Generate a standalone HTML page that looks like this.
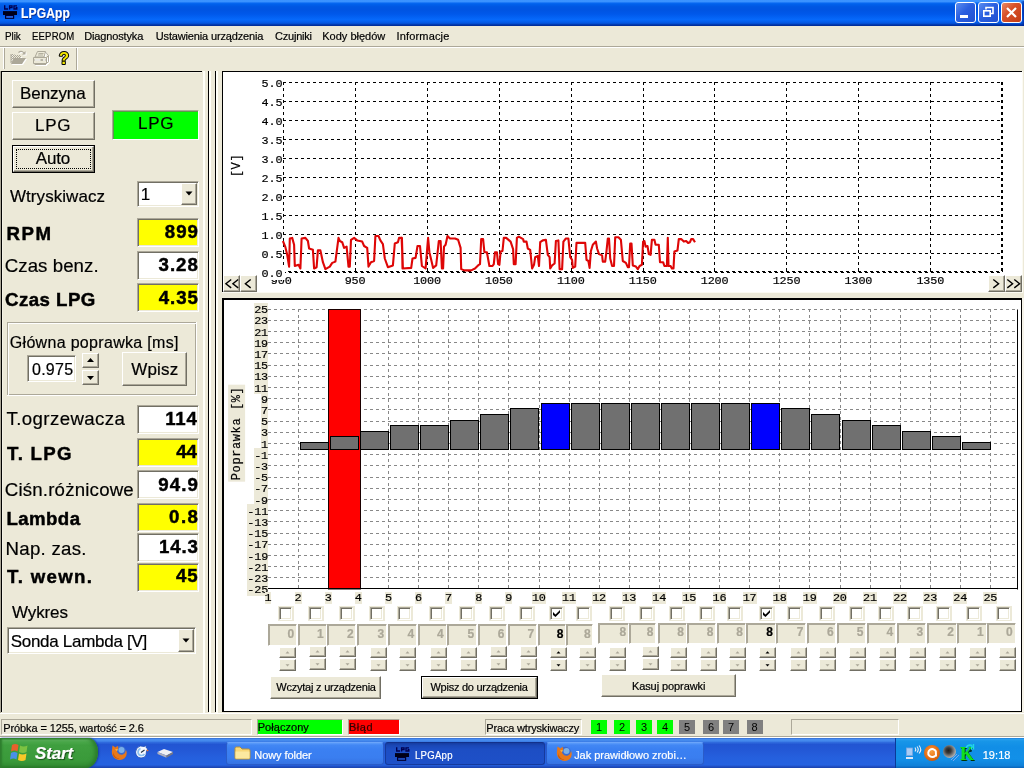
<!DOCTYPE html><html><head><meta charset="utf-8"><title>LPGApp</title><style>
*{box-sizing:border-box;margin:0;padding:0}
html,body{width:1024px;height:768px;overflow:hidden;background:#ece9d8;font-family:"Liberation Sans",sans-serif;}
.a{position:absolute}
.t{position:absolute;white-space:nowrap;color:#000;-webkit-text-stroke:0.2px}
#root{position:absolute;left:0;top:0;width:1024px;height:768px;will-change:transform}
.mono{font-family:"Liberation Mono",monospace;font-size:11.8px;letter-spacing:-0.15px}
.btn{position:absolute;background:#ece9d8;border:1px solid;border-color:#fff #716f64 #716f64 #fff;box-shadow:inset -1px -1px 0 #aca899}
.sunk{position:absolute;border:1px solid;border-color:#aca899 #fff #fff #aca899;box-shadow:inset 1px 1px 0 #716f64, inset -1px -1px 0 #ece9d8;}
.sb{position:absolute;border:1px solid;border-color:#aca899 #fff #fff #aca899}
</style></head><body><div id="root">
<div class="a" style="left:0;top:0;width:1024px;height:26px;background:linear-gradient(to bottom,#3b93ff 0px,#3a92ff 1.8px,#0a6af2 3px,#0061ec 4px,#0056e2 7px,#0054e2 10px,#0058ea 14px,#0464f6 18px,#0668fa 19.5px,#0562f2 21px,#0457e0 23px,#0348c8 24px,#002e9c 25px,#002e9c 26px)"></div>
<div class="a" style="left:1021px;top:1px;width:3px;height:25px;background:linear-gradient(to right,rgba(0,40,160,0),rgba(0,36,150,0.75))"></div>
<svg class="a" style="left:3px;top:5px" width="15" height="15" viewBox="0 0 15 15"><rect x="0" y="6.1" width="14" height="3.9" fill="#000018"/><rect x="2" y="9.8" width="9.2" height="4.1" fill="#000030"/><rect x="3.2" y="11.1" width="6.8" height="1.7" fill="#2a6ae8"/><path d="M1.7 0.2V4H5 M6.6 4.6V0.8H9V2.6H6.6 M14 0.8H11V4H13.8V2.6H12.6" fill="none" stroke="#000050" stroke-width="1.35"/></svg>
<div class="t" style="left:20.95px;top:6.28px;font-size:14px;line-height:14px;letter-spacing:0.17px;color:#fff;font-weight:bold;transform:scaleX(0.86);transform-origin:0 0;text-shadow:1px 1px 0 #0a2a8a;">LPGApp</div>
<div class="a" style="left:955px;top:2px;width:21px;height:21px;border:1px solid #fff;border-radius:3px;background:linear-gradient(135deg,#5b8df0 0%,#2a5fe0 45%,#2050d0 100%)"></div>
<div class="a" style="left:978px;top:2px;width:21px;height:21px;border:1px solid #fff;border-radius:3px;background:linear-gradient(135deg,#5b8df0 0%,#2a5fe0 45%,#2050d0 100%)"></div>
<div class="a" style="left:1001px;top:2px;width:21px;height:21px;border:1px solid #fff;border-radius:3px;background:linear-gradient(135deg,#e88a68 0%,#d8512a 40%,#c43c14 100%)"></div>
<div class="a" style="left:960px;top:15px;width:8px;height:3px;background:#fff"></div>
<svg class="a" style="left:978px;top:2px" width="21" height="21" viewBox="0 0 21 21"><path d="M8 7.5V5.5H15V11.5H13" fill="none" stroke="#fff" stroke-width="1.6"/><rect x="5.8" y="8.8" width="6.4" height="5.4" fill="none" stroke="#fff" stroke-width="1.6"/></svg>
<svg class="a" style="left:1001px;top:2px" width="21" height="21" viewBox="0 0 21 21"><path d="M6 6L15 15M15 6L6 15" stroke="#fff" stroke-width="2.2" fill="none"/></svg>
<div class="t" style="left:5.00px;top:31.02px;font-size:11px;line-height:11px;letter-spacing:-0.083px;color:#000;transform:scaleX(0.9);transform-origin:0 0;">Plik</div>
<div class="t" style="left:32.00px;top:31.02px;font-size:11px;line-height:11px;letter-spacing:0.2px;color:#000;transform:scaleX(0.87);transform-origin:0 0;">EEPROM</div>
<div class="t" style="left:84.25px;top:31.02px;font-size:11px;line-height:11px;letter-spacing:-0.15px;color:#000;">Diagnostyka</div>
<div class="t" style="left:155.75px;top:31.02px;font-size:11px;line-height:11px;letter-spacing:-0.15px;color:#000;">Ustawienia urządzenia</div>
<div class="t" style="left:275.00px;top:31.02px;font-size:11px;line-height:11px;letter-spacing:-0.215px;color:#000;">Czujniki</div>
<div class="t" style="left:322.25px;top:30.77px;font-size:11px;line-height:11px;letter-spacing:0.0px;color:#000;">Kody błędów</div>
<div class="t" style="left:396.50px;top:31.02px;font-size:11px;line-height:11px;letter-spacing:0.166px;color:#000;">Informacje</div>
<div class="a" style="left:0;top:46px;width:1024px;height:1px;background:#aca899"></div>
<div class="a" style="left:0;top:47px;width:1024px;height:1px;background:#fff"></div>
<div class="a" style="left:3px;top:48px;width:1px;height:21px;background:#fff"></div>
<div class="a" style="left:4px;top:48px;width:1px;height:21px;background:#aca899"></div>
<div class="a" style="left:76px;top:48px;width:1px;height:22px;background:#aca899"></div>
<div class="a" style="left:77px;top:48px;width:1px;height:22px;background:#fff"></div>
<svg class="a" style="left:10px;top:50px;filter:drop-shadow(1px 1px 0 #fff)" width="18" height="16" viewBox="0 0 18 16"><defs><pattern id="chk" width="2" height="2" patternUnits="userSpaceOnUse"><rect width="1" height="1" fill="#aca899"/><rect x="1" y="1" width="1" height="1" fill="#aca899"/></pattern></defs><path d="M1 4H4L5 5H11V8H3.5L1 13Z" fill="url(#chk)"/><path d="M1 4V13" stroke="#aca899" stroke-width="1"/><path d="M3.5 8H16L12 14H1Z" fill="#aca899"/><path d="M8.5 2.5Q11.5 0 14 3" stroke="#aca899" fill="none" stroke-width="1.1"/><path d="M15.5 1V4.5H12Z" fill="#aca899"/></svg>
<svg class="a" style="left:32px;top:50px;filter:drop-shadow(1px 1px 0 #fff)" width="18" height="16" viewBox="0 0 18 16"><path d="M5.5 1.5H13.5L12 7H3Z" fill="#ece9d8" stroke="#aca899"/><path d="M6.5 3.5H11.5M6 5H11" stroke="#aca899" stroke-width="0.9"/><path d="M1.5 7.5H14.5V13.5H1.5Z" fill="#ece9d8" stroke="#aca899"/><path d="M14.5 7.5L16.5 5.5V11.5L14.5 13.5M13.5 2L16.5 5.5" fill="none" stroke="#aca899"/><path d="M2.5 10H13.5" stroke="#aca899" stroke-width="1.6"/><rect x="3" y="9.3" width="5.5" height="1.4" fill="#fff"/><rect x="11" y="9.3" width="2" height="1.4" fill="#fff"/><path d="M2.5 14.5H14" stroke="#aca899" stroke-width="1"/></svg>
<svg class="a" style="left:55px;top:48px" width="20" height="20" viewBox="0 0 20 20"><text x="4" y="15.6" font-family="Liberation Sans" font-weight="bold" font-size="16.5" fill="#f4e800" stroke="#000" stroke-width="2" paint-order="stroke" stroke-linejoin="round">?</text></svg>
<div class="a" style="left:0;top:71px;width:1px;height:642px;background:#aca899"></div>
<div class="a" style="left:1px;top:71px;width:201px;height:1px;background:#000"></div>
<div class="a" style="left:1px;top:71px;width:1px;height:641px;background:#000"></div>
<div class="a" style="left:2px;top:72px;width:200px;height:1px;background:#f4f2e6"></div>
<div class="a" style="left:2px;top:72px;width:1px;height:640px;background:#f4f2e6"></div>
<div class="a" style="left:202.5px;top:71px;width:2px;height:642px;background:#fffff8"></div>
<div class="btn" style="left:12px;top:80px;width:83px;height:28px"></div>
<div class="t" style="left:20.00px;top:85.19px;font-size:17px;line-height:17px;letter-spacing:-0.082px;color:#000;">Benzyna</div>
<div class="btn" style="left:12px;top:112px;width:83px;height:28px"></div>
<div class="t" style="left:35.00px;top:116.94px;font-size:17px;line-height:17px;letter-spacing:0.75px;color:#000;">LPG</div>
<div class="a" style="left:12px;top:145px;width:83px;height:28px;background:#000"></div>
<div class="btn" style="left:13px;top:146px;width:81px;height:26px"></div>
<div class="a" style="left:16px;top:149px;width:75px;height:20px;border:1px dotted #000"></div>
<div class="t" style="left:35.75px;top:149.94px;font-size:17px;line-height:17px;letter-spacing:-0.163px;color:#000;">Auto</div>
<div class="sunk" style="left:112px;top:110px;width:87px;height:30px;background:#00ff00;box-shadow:inset 1px 1px 0 #5a9a4a"></div>
<div class="t" style="left:138.00px;top:115.44px;font-size:17px;line-height:17px;letter-spacing:0.75px;color:#000;">LPG</div>
<div class="t" style="left:10.00px;top:188.19px;font-size:17px;line-height:17px;letter-spacing:0.05px;color:#000;">Wtryskiwacz</div>
<div class="sunk" style="left:137px;top:181px;width:62px;height:26px;background:#fff"></div>
<div class="t" style="left:140.75px;top:186.44px;font-size:17px;line-height:17px;letter-spacing:0px;color:#000;">1</div>
<div class="btn" style="left:181px;top:183px;width:16px;height:22px"></div>
<svg class="a" style="left:185px;top:191px" width="8" height="5"><path d="M0.5 0.5H7.5L4 4.5Z" fill="#000"/></svg>
<div class="sunk" style="left:137px;top:217.5px;width:62px;height:29px;background:#ffff00"></div>
<div class="t" style="left:6.50px;top:224.84px;font-size:18.67px;line-height:18.67px;letter-spacing:1.5px;color:#000;font-weight:bold;-webkit-text-stroke:0.45px #000;">RPM</div>
<div class="t" style="left:164.75px;top:223.39px;font-size:18.67px;line-height:18.67px;letter-spacing:1.0px;color:#000;font-weight:bold;-webkit-text-stroke:0.45px #000;">899</div>
<div class="sunk" style="left:137px;top:251px;width:62px;height:29px;background:#fff"></div>
<div class="t" style="left:4.75px;top:256.89px;font-size:18.67px;line-height:18.67px;letter-spacing:0.056px;color:#000;-webkit-text-stroke:0.2px #000;">Czas benz.</div>
<div class="t" style="left:158.50px;top:256.39px;font-size:18.67px;line-height:18.67px;letter-spacing:1.004px;color:#000;font-weight:bold;-webkit-text-stroke:0.45px #000;">3.28</div>
<div class="sunk" style="left:137px;top:283px;width:62px;height:29px;background:#ffff00"></div>
<div class="t" style="left:5.00px;top:290.89px;font-size:18.67px;line-height:18.67px;letter-spacing:0.465px;color:#000;font-weight:bold;-webkit-text-stroke:0.45px #000;">Czas LPG</div>
<div class="t" style="left:158.75px;top:288.89px;font-size:18.67px;line-height:18.67px;letter-spacing:0.918px;color:#000;font-weight:bold;-webkit-text-stroke:0.45px #000;">4.35</div>
<div class="sunk" style="left:137px;top:405px;width:62px;height:29px;background:#fff"></div>
<div class="t" style="left:6.40px;top:409.84px;font-size:18.67px;line-height:18.67px;letter-spacing:0.41px;color:#000;-webkit-text-stroke:0.2px #000;">T.ogrzewacza</div>
<div class="t" style="left:165.25px;top:410.14px;font-size:18.67px;line-height:18.67px;letter-spacing:0.75px;color:#000;font-weight:bold;-webkit-text-stroke:0.45px #000;">114</div>
<div class="sunk" style="left:137px;top:437.5px;width:62px;height:29px;background:#ffff00"></div>
<div class="t" style="left:7.00px;top:445.39px;font-size:18.67px;line-height:18.67px;letter-spacing:1.3px;color:#000;font-weight:bold;-webkit-text-stroke:0.45px #000;">T. LPG</div>
<div class="t" style="left:176.25px;top:443.14px;font-size:18.67px;line-height:18.67px;letter-spacing:-0.25px;color:#000;font-weight:bold;-webkit-text-stroke:0.45px #000;">44</div>
<div class="sunk" style="left:137px;top:470px;width:62px;height:29px;background:#fff"></div>
<div class="t" style="left:4.75px;top:481.14px;font-size:18.67px;line-height:18.67px;letter-spacing:0.192px;color:#000;-webkit-text-stroke:0.2px #000;">Ciśn.różnicowe</div>
<div class="t" style="left:158.25px;top:476.39px;font-size:18.67px;line-height:18.67px;letter-spacing:1.087px;color:#000;font-weight:bold;-webkit-text-stroke:0.45px #000;">94.9</div>
<div class="sunk" style="left:137px;top:502.5px;width:62px;height:29px;background:#ffff00"></div>
<div class="t" style="left:6.50px;top:510.14px;font-size:18.67px;line-height:18.67px;letter-spacing:0.4px;color:#000;font-weight:bold;-webkit-text-stroke:0.45px #000;">Lambda</div>
<div class="t" style="left:169.00px;top:508.39px;font-size:18.67px;line-height:18.67px;letter-spacing:1.5px;color:#000;font-weight:bold;-webkit-text-stroke:0.45px #000;">0.8</div>
<div class="sunk" style="left:137px;top:532.5px;width:62px;height:29px;background:#fff"></div>
<div class="t" style="left:5.50px;top:540.14px;font-size:18.67px;line-height:18.67px;letter-spacing:0.281px;color:#000;-webkit-text-stroke:0.2px #000;">Nap. zas.</div>
<div class="t" style="left:159.00px;top:538.39px;font-size:18.67px;line-height:18.67px;letter-spacing:0.833px;color:#000;font-weight:bold;-webkit-text-stroke:0.45px #000;">14.3</div>
<div class="sunk" style="left:137px;top:562.5px;width:62px;height:29px;background:#ffff00"></div>
<div class="t" style="left:7.00px;top:568.24px;font-size:18.67px;line-height:18.67px;letter-spacing:1.322px;color:#000;font-weight:bold;-webkit-text-stroke:0.45px #000;">T. wewn.</div>
<div class="t" style="left:176.00px;top:566.84px;font-size:18.67px;line-height:18.67px;letter-spacing:0.85px;color:#000;font-weight:bold;-webkit-text-stroke:0.45px #000;">45</div>
<div class="a" style="left:7px;top:322px;width:189px;height:73px;border:1px solid #aca899"></div><div class="a" style="left:8px;top:323px;width:189px;height:73px;border:1px solid #fff;border-right-color:transparent;border-bottom-color:transparent"></div>
<div class="a" style="left:196px;top:322px;width:1px;height:74px;background:#fff"></div><div class="a" style="left:7px;top:395px;width:190px;height:1px;background:#fff"></div>
<div class="t" style="left:9.75px;top:335.12px;font-size:16px;line-height:16px;letter-spacing:0.316px;color:#000;">Główna poprawka [ms]</div>
<div class="sunk" style="left:27px;top:355px;width:49px;height:27px;background:#fff"></div>
<div class="t" style="left:32.00px;top:362.12px;font-size:16px;line-height:16px;letter-spacing:0.25px;color:#000;">0.975</div>
<div class="btn" style="left:82px;top:353px;width:17px;height:15px"></div>
<div class="btn" style="left:82px;top:370px;width:17px;height:15px"></div>
<svg class="a" style="left:87px;top:358px" width="7" height="4"><path d="M0 4H7L3.5 0Z" fill="#000"/></svg>
<svg class="a" style="left:87px;top:376px" width="7" height="4"><path d="M0 0H7L3.5 4Z" fill="#000"/></svg>
<div class="btn" style="left:122px;top:352px;width:65px;height:34px"></div>
<div class="t" style="left:131.25px;top:361.44px;font-size:17px;line-height:17px;letter-spacing:0.178px;color:#000;">Wpisz</div>
<div class="t" style="left:12.00px;top:604.44px;font-size:17px;line-height:17px;letter-spacing:-0.11px;color:#000;">Wykres</div>
<div class="sunk" style="left:7px;top:627px;width:189px;height:27px;background:#fff"></div>
<div class="t" style="left:10.70px;top:633.44px;font-size:17px;line-height:17px;letter-spacing:-0.284px;color:#000;">Sonda Lambda [V]</div>
<div class="btn" style="left:178px;top:629px;width:16px;height:23px"></div>
<svg class="a" style="left:182px;top:638px" width="8" height="5"><path d="M0.5 0.5H7.5L4 4.5Z" fill="#000"/></svg>
<div class="a" style="left:208px;top:71px;width:1px;height:641px;background:#000"></div>
<div class="a" style="left:209px;top:71px;width:2px;height:642px;background:#fffff8"></div>
<div class="a" style="left:215px;top:71px;width:1px;height:641px;background:#000"></div>
<div class="a" style="left:216px;top:71px;width:2px;height:642px;background:#fffff8"></div>
<div class="a" style="left:222px;top:71px;width:800px;height:221px;background:#fff"></div>
<div class="a" style="left:222px;top:71px;width:800px;height:1px;background:#000"></div>
<div class="a" style="left:222px;top:71px;width:1px;height:221px;background:#000"></div>
<div class="a" style="left:222px;top:292px;width:801px;height:1px;background:#fbfaf2"></div><div class="a" style="left:1022px;top:71px;width:1px;height:222px;background:#fbfaf2"></div>
<svg class="a" style="left:0;top:0" width="1024" height="300" viewBox="0 0 1024 300"><line x1="283.0" y1="82.50" x2="1002" y2="82.50" stroke="#000" stroke-width="1" stroke-dasharray="3 3"/><line x1="283.0" y1="101.50" x2="1002" y2="101.50" stroke="#000" stroke-width="1" stroke-dasharray="3 3"/><line x1="283.0" y1="120.50" x2="1002" y2="120.50" stroke="#000" stroke-width="1" stroke-dasharray="3 3"/><line x1="283.0" y1="139.50" x2="1002" y2="139.50" stroke="#000" stroke-width="1" stroke-dasharray="3 3"/><line x1="283.0" y1="158.50" x2="1002" y2="158.50" stroke="#000" stroke-width="1" stroke-dasharray="3 3"/><line x1="283.0" y1="177.50" x2="1002" y2="177.50" stroke="#000" stroke-width="1" stroke-dasharray="3 3"/><line x1="283.0" y1="196.50" x2="1002" y2="196.50" stroke="#000" stroke-width="1" stroke-dasharray="3 3"/><line x1="283.0" y1="215.50" x2="1002" y2="215.50" stroke="#000" stroke-width="1" stroke-dasharray="3 3"/><line x1="283.0" y1="234.50" x2="1002" y2="234.50" stroke="#000" stroke-width="1" stroke-dasharray="3 3"/><line x1="283.0" y1="253.50" x2="1002" y2="253.50" stroke="#000" stroke-width="1" stroke-dasharray="3 3"/><line x1="283.50" y1="82.0" x2="283.50" y2="272.75" stroke="#000" stroke-width="1" stroke-dasharray="3 3"/><line x1="355.50" y1="82.0" x2="355.50" y2="272.75" stroke="#000" stroke-width="1" stroke-dasharray="3 3"/><line x1="427.50" y1="82.0" x2="427.50" y2="272.75" stroke="#000" stroke-width="1" stroke-dasharray="3 3"/><line x1="499.50" y1="82.0" x2="499.50" y2="272.75" stroke="#000" stroke-width="1" stroke-dasharray="3 3"/><line x1="571.50" y1="82.0" x2="571.50" y2="272.75" stroke="#000" stroke-width="1" stroke-dasharray="3 3"/><line x1="643.50" y1="82.0" x2="643.50" y2="272.75" stroke="#000" stroke-width="1" stroke-dasharray="3 3"/><line x1="714.50" y1="82.0" x2="714.50" y2="272.75" stroke="#000" stroke-width="1" stroke-dasharray="3 3"/><line x1="786.50" y1="82.0" x2="786.50" y2="272.75" stroke="#000" stroke-width="1" stroke-dasharray="3 3"/><line x1="858.50" y1="82.0" x2="858.50" y2="272.75" stroke="#000" stroke-width="1" stroke-dasharray="3 3"/><line x1="930.50" y1="82.0" x2="930.50" y2="272.75" stroke="#000" stroke-width="1" stroke-dasharray="3 3"/><line x1="283" y1="271.5" x2="1003" y2="271.5" stroke="#000" stroke-width="1" stroke-dasharray="3 3" stroke-dashoffset="1"/><line x1="283" y1="272.5" x2="1003" y2="272.5" stroke="#000" stroke-width="1" stroke-dasharray="3 3"/><line x1="1002" y1="82" x2="1002" y2="273" stroke="#000" stroke-width="2" stroke-dasharray="3 3"/><path d="M282.9 241.0 L285.4 247.2 L287.2 254.8 L289.1 266.6 L289.8 238.5 L292.2 237.9 L294.1 244.8 L294.8 266.0 L298.5 264.8 L300.4 268.5 L301.6 238.5 L305.4 237.9 L307.9 241.0 L309.1 248.5 L312.9 249.8 L314.1 268.5 L316.6 267.2 L317.9 250.4 L320.4 250.4 L322.9 262.2 L325.4 269.1 L329.8 266.6 L332.2 262.9 L335.4 261.6 L338.5 237.9 L339.8 241.0 L342.2 242.2 L344.1 247.9 L346.6 246.6 L348.5 266.6 L349.8 266.6 L351.0 239.8 L354.1 237.9 L357.2 240.4 L362.2 241.6 L364.1 246.0 L367.2 247.9 L368.5 266.6 L371.0 262.2 L374.1 261.0 L375.4 236.0 L378.5 236.0 L380.4 240.4 L382.9 244.1 L384.8 258.5 L387.9 267.2 L392.9 265.4 L394.8 243.5 L397.9 242.2 L399.1 237.9 L401.6 237.9 L402.9 268.5 L401.9 237.9 L402.5 268.5 L411.2 267.9 L412.5 258.5 L415.6 257.9 L417.5 246.0 L420.0 246.0 L421.9 266.0 L425.6 268.5 L426.9 252.2 L428.1 237.9 L429.4 252.2 L431.2 259.8 L433.1 267.9 L436.2 265.4 L438.8 241.0 L440.6 241.0 L441.9 268.5 L443.1 268.5 L444.0 246.6 L445.6 244.8 L447.5 236.0 L450.0 238.5 L455.0 238.5 L458.1 239.8 L460.6 247.9 L461.2 269.1 L464.4 270.4 L471.2 270.4 L475.0 268.5 L478.8 264.8 L480.0 264.1 L481.2 239.1 L483.1 239.1 L484.4 252.2 L486.9 252.2 L489.4 266.0 L492.5 266.0 L493.8 264.1 L495.0 252.2 L496.9 252.2 L498.1 264.1 L499.4 264.8 L500.6 251.6 L502.5 251.0 L503.8 237.9 L506.2 237.9 L510.6 241.6 L513.1 249.1 L513.8 264.1 L515.6 264.1 L516.9 237.9 L518.8 236.6 L523.1 239.1 L523.8 241.6 L524.0 241.6 L526.5 241.6 L527.8 248.5 L530.2 249.8 L532.1 268.5 L534.0 264.8 L535.2 257.2 L537.8 256.0 L539.0 266.0 L540.2 242.2 L542.8 240.4 L545.9 239.8 L547.8 254.8 L549.6 257.2 L550.2 268.5 L552.1 265.4 L554.6 263.5 L555.9 241.0 L558.4 240.4 L559.6 269.1 L562.1 269.1 L563.4 241.6 L565.9 238.5 L568.4 238.5 L570.2 257.2 L572.1 259.8 L572.8 267.9 L575.2 266.6 L576.5 242.9 L585.2 242.9 L586.5 259.8 L588.4 261.0 L589.6 267.9 L590.9 251.0 L592.8 244.8 L595.9 241.6 L597.1 248.5 L599.0 254.1 L602.1 255.4 L602.8 261.6 L605.2 261.6 L606.5 251.0 L607.8 238.5 L609.0 238.5 L610.2 258.5 L612.1 266.0 L614.0 266.0 L615.2 237.2 L618.4 237.2 L620.9 239.8 L622.8 261.0 L625.9 262.9 L627.8 267.2 L629.0 267.2 L630.2 243.5 L631.5 243.5 L632.8 265.4 L635.9 266.6 L637.8 269.1 L639.6 266.0 L641.9 264.8 L643.1 241.6 L644.4 241.0 L645.6 246.6 L647.5 246.0 L648.8 254.1 L650.6 254.8 L651.9 239.8 L654.4 239.8 L655.6 244.8 L658.8 244.8 L660.0 262.2 L663.1 262.2 L664.4 266.0 L666.9 266.0 L667.8 237.9 L668.5 266.0 L670.6 266.0 L671.9 268.5 L673.5 268.5 L674.4 251.6 L677.5 250.4 L678.8 239.1 L681.2 239.1 L683.8 241.6 L686.2 241.0 L688.1 242.9 L690.0 242.2 L691.2 239.1 L693.1 239.1 L695.0 242.2" fill="none" stroke="#de0606" stroke-width="2.1" stroke-linejoin="round"/></svg>
<div class="t mono" style="left:270.80px;top:274.8px;line-height:12px">900</div>
<div class="t mono" style="left:344.70px;top:274.8px;line-height:12px">950</div>
<div class="t mono" style="left:413.15px;top:274.8px;line-height:12px">1000</div>
<div class="t mono" style="left:485.05px;top:274.8px;line-height:12px">1050</div>
<div class="t mono" style="left:556.95px;top:274.8px;line-height:12px">1100</div>
<div class="t mono" style="left:628.85px;top:274.8px;line-height:12px">1150</div>
<div class="t mono" style="left:700.75px;top:274.8px;line-height:12px">1200</div>
<div class="t mono" style="left:772.65px;top:274.8px;line-height:12px">1250</div>
<div class="t mono" style="left:844.55px;top:274.8px;line-height:12px">1300</div>
<div class="t mono" style="left:916.45px;top:274.8px;line-height:12px">1350</div>
<div class="t mono" style="left:261.6px;top:78.05px;line-height:12px;height:12px;width:20.7px;overflow:hidden;background:#fff">5.0</div>
<div class="t mono" style="left:261.6px;top:97.05px;line-height:12px;height:12px;width:20.7px;overflow:hidden;background:#fff">4.5</div>
<div class="t mono" style="left:261.6px;top:116.05px;line-height:12px;height:12px;width:20.7px;overflow:hidden;background:#fff">4.0</div>
<div class="t mono" style="left:261.6px;top:135.05px;line-height:12px;height:12px;width:20.7px;overflow:hidden;background:#fff">3.5</div>
<div class="t mono" style="left:261.6px;top:154.05px;line-height:12px;height:12px;width:20.7px;overflow:hidden;background:#fff">3.0</div>
<div class="t mono" style="left:261.6px;top:173.05px;line-height:12px;height:12px;width:20.7px;overflow:hidden;background:#fff">2.5</div>
<div class="t mono" style="left:261.6px;top:192.05px;line-height:12px;height:12px;width:20.7px;overflow:hidden;background:#fff">2.0</div>
<div class="t mono" style="left:261.6px;top:211.05px;line-height:12px;height:12px;width:20.7px;overflow:hidden;background:#fff">1.5</div>
<div class="t mono" style="left:261.6px;top:230.05px;line-height:12px;height:12px;width:20.7px;overflow:hidden;background:#fff">1.0</div>
<div class="t mono" style="left:261.6px;top:249.05px;line-height:12px;height:12px;width:20.7px;overflow:hidden;background:#fff">0.5</div>
<div class="t mono" style="left:261.6px;top:268.05px;line-height:12px;height:12px;width:23.5px;overflow:hidden;background:#fff">0.0</div>
<div class="t mono" style="left:225.5px;top:158px;font-size:12px;letter-spacing:0.6px;line-height:15px;height:15px;transform:rotate(-90deg);transform-origin:center;width:23.4px">[V]</div>
<div class="btn" style="left:223px;top:274.5px;width:17px;height:17.5px"></div>
<svg class="a" style="left:223px;top:275.5px" width="17" height="17"><path d="M8.2 3.5L2.9 7.7L8.2 11.9M15.2 3.5L9.9 7.7L15.2 11.9" fill="none" stroke="#000" stroke-width="1.4"/></svg>
<div class="btn" style="left:240px;top:274.5px;width:17px;height:17.5px"></div>
<svg class="a" style="left:240px;top:275.5px" width="17" height="17"><path d="M10.7 3.5L5.4 7.7L10.7 11.9" fill="none" stroke="#000" stroke-width="1.4"/></svg>
<div class="btn" style="left:988px;top:274.5px;width:17px;height:17.5px"></div>
<svg class="a" style="left:988px;top:275.5px" width="17" height="17"><path d="M5.3 3.5L10.6 7.7L5.3 11.9" fill="none" stroke="#000" stroke-width="1.4"/></svg>
<div class="btn" style="left:1005px;top:274.5px;width:17px;height:17.5px"></div>
<svg class="a" style="left:1005px;top:275.5px" width="17" height="17"><path d="M2.3 3.5L7.6 7.7L2.3 11.9M9.3 3.5L14.6 7.7L9.3 11.9" fill="none" stroke="#000" stroke-width="1.4"/></svg>
<div class="a" style="left:1022px;top:298px;width:2px;height:414px;background:#f6f4ea"></div>
<div class="a" style="left:222px;top:298px;width:800px;height:414px;background:#fff;border:2px solid #000;border-right-width:1px;border-bottom-width:1px"></div>
<svg class="a" style="left:0;top:296px" width="1024" height="300" viewBox="0 296 1024 300"><line x1="268.0" y1="309.50" x2="1017" y2="309.50" stroke="#888" stroke-width="1" stroke-dasharray="3 3"/><line x1="268.0" y1="320.50" x2="1017" y2="320.50" stroke="#888" stroke-width="1" stroke-dasharray="3 3"/><line x1="268.0" y1="331.50" x2="1017" y2="331.50" stroke="#888" stroke-width="1" stroke-dasharray="3 3"/><line x1="268.0" y1="342.50" x2="1017" y2="342.50" stroke="#888" stroke-width="1" stroke-dasharray="3 3"/><line x1="268.0" y1="353.50" x2="1017" y2="353.50" stroke="#888" stroke-width="1" stroke-dasharray="3 3"/><line x1="268.0" y1="365.50" x2="1017" y2="365.50" stroke="#888" stroke-width="1" stroke-dasharray="3 3"/><line x1="268.0" y1="376.50" x2="1017" y2="376.50" stroke="#888" stroke-width="1" stroke-dasharray="3 3"/><line x1="268.0" y1="387.50" x2="1017" y2="387.50" stroke="#888" stroke-width="1" stroke-dasharray="3 3"/><line x1="268.0" y1="398.50" x2="1017" y2="398.50" stroke="#888" stroke-width="1" stroke-dasharray="3 3"/><line x1="268.0" y1="409.50" x2="1017" y2="409.50" stroke="#888" stroke-width="1" stroke-dasharray="3 3"/><line x1="268.0" y1="421.50" x2="1017" y2="421.50" stroke="#888" stroke-width="1" stroke-dasharray="3 3"/><line x1="268.0" y1="432.50" x2="1017" y2="432.50" stroke="#888" stroke-width="1" stroke-dasharray="3 3"/><line x1="268.0" y1="443.50" x2="1017" y2="443.50" stroke="#888" stroke-width="1" stroke-dasharray="3 3"/><line x1="268.0" y1="454.50" x2="1017" y2="454.50" stroke="#888" stroke-width="1" stroke-dasharray="3 3"/><line x1="268.0" y1="465.50" x2="1017" y2="465.50" stroke="#888" stroke-width="1" stroke-dasharray="3 3"/><line x1="268.0" y1="477.50" x2="1017" y2="477.50" stroke="#888" stroke-width="1" stroke-dasharray="3 3"/><line x1="268.0" y1="488.50" x2="1017" y2="488.50" stroke="#888" stroke-width="1" stroke-dasharray="3 3"/><line x1="268.0" y1="499.50" x2="1017" y2="499.50" stroke="#888" stroke-width="1" stroke-dasharray="3 3"/><line x1="268.0" y1="510.50" x2="1017" y2="510.50" stroke="#888" stroke-width="1" stroke-dasharray="3 3"/><line x1="268.0" y1="521.50" x2="1017" y2="521.50" stroke="#888" stroke-width="1" stroke-dasharray="3 3"/><line x1="268.0" y1="533.50" x2="1017" y2="533.50" stroke="#888" stroke-width="1" stroke-dasharray="3 3"/><line x1="268.0" y1="544.50" x2="1017" y2="544.50" stroke="#888" stroke-width="1" stroke-dasharray="3 3"/><line x1="268.0" y1="555.50" x2="1017" y2="555.50" stroke="#888" stroke-width="1" stroke-dasharray="3 3"/><line x1="268.0" y1="566.50" x2="1017" y2="566.50" stroke="#888" stroke-width="1" stroke-dasharray="3 3"/><line x1="268.0" y1="577.50" x2="1017" y2="577.50" stroke="#888" stroke-width="1" stroke-dasharray="3 3"/><line x1="298.50" y1="309.0" x2="298.50" y2="589.5" stroke="#888" stroke-width="1" stroke-dasharray="3 3"/><line x1="328.50" y1="309.0" x2="328.50" y2="589.5" stroke="#888" stroke-width="1" stroke-dasharray="3 3"/><line x1="358.50" y1="309.0" x2="358.50" y2="589.5" stroke="#888" stroke-width="1" stroke-dasharray="3 3"/><line x1="388.50" y1="309.0" x2="388.50" y2="589.5" stroke="#888" stroke-width="1" stroke-dasharray="3 3"/><line x1="418.50" y1="309.0" x2="418.50" y2="589.5" stroke="#888" stroke-width="1" stroke-dasharray="3 3"/><line x1="448.50" y1="309.0" x2="448.50" y2="589.5" stroke="#888" stroke-width="1" stroke-dasharray="3 3"/><line x1="478.50" y1="309.0" x2="478.50" y2="589.5" stroke="#888" stroke-width="1" stroke-dasharray="3 3"/><line x1="508.50" y1="309.0" x2="508.50" y2="589.5" stroke="#888" stroke-width="1" stroke-dasharray="3 3"/><line x1="539.50" y1="309.0" x2="539.50" y2="589.5" stroke="#888" stroke-width="1" stroke-dasharray="3 3"/><line x1="569.50" y1="309.0" x2="569.50" y2="589.5" stroke="#888" stroke-width="1" stroke-dasharray="3 3"/><line x1="599.50" y1="309.0" x2="599.50" y2="589.5" stroke="#888" stroke-width="1" stroke-dasharray="3 3"/><line x1="629.50" y1="309.0" x2="629.50" y2="589.5" stroke="#888" stroke-width="1" stroke-dasharray="3 3"/><line x1="659.50" y1="309.0" x2="659.50" y2="589.5" stroke="#888" stroke-width="1" stroke-dasharray="3 3"/><line x1="689.50" y1="309.0" x2="689.50" y2="589.5" stroke="#888" stroke-width="1" stroke-dasharray="3 3"/><line x1="719.50" y1="309.0" x2="719.50" y2="589.5" stroke="#888" stroke-width="1" stroke-dasharray="3 3"/><line x1="749.50" y1="309.0" x2="749.50" y2="589.5" stroke="#888" stroke-width="1" stroke-dasharray="3 3"/><line x1="779.50" y1="309.0" x2="779.50" y2="589.5" stroke="#888" stroke-width="1" stroke-dasharray="3 3"/><line x1="809.50" y1="309.0" x2="809.50" y2="589.5" stroke="#888" stroke-width="1" stroke-dasharray="3 3"/><line x1="840.50" y1="309.0" x2="840.50" y2="589.5" stroke="#888" stroke-width="1" stroke-dasharray="3 3"/><line x1="870.50" y1="309.0" x2="870.50" y2="589.5" stroke="#888" stroke-width="1" stroke-dasharray="3 3"/><line x1="900.50" y1="309.0" x2="900.50" y2="589.5" stroke="#888" stroke-width="1" stroke-dasharray="3 3"/><line x1="930.50" y1="309.0" x2="930.50" y2="589.5" stroke="#888" stroke-width="1" stroke-dasharray="3 3"/><line x1="960.50" y1="309.0" x2="960.50" y2="589.5" stroke="#888" stroke-width="1" stroke-dasharray="3 3"/><line x1="990.50" y1="309.0" x2="990.50" y2="589.5" stroke="#888" stroke-width="1" stroke-dasharray="3 3"/><rect x="328.5" y="309.5" width="32" height="279.5" fill="#ff0000" stroke="#1a0000" stroke-width="1"/><rect x="300.5" y="442.5" width="28.0" height="7.0" fill="#707070" stroke="#000" stroke-width="1"/><rect x="330.5" y="436.5" width="28.0" height="13.0" fill="#707070" stroke="#000" stroke-width="1"/><rect x="360.5" y="431.5" width="28.0" height="18.0" fill="#707070" stroke="#000" stroke-width="1"/><rect x="390.5" y="425.5" width="28.0" height="24.0" fill="#707070" stroke="#000" stroke-width="1"/><rect x="420.5" y="425.5" width="28.0" height="24.0" fill="#707070" stroke="#000" stroke-width="1"/><rect x="450.5" y="420.5" width="28.0" height="29.0" fill="#707070" stroke="#000" stroke-width="1"/><rect x="480.5" y="414.5" width="28.0" height="35.0" fill="#707070" stroke="#000" stroke-width="1"/><rect x="510.5" y="408.5" width="28.0" height="41.0" fill="#707070" stroke="#000" stroke-width="1"/><rect x="541.5" y="403.5" width="28.0" height="46.0" fill="#0000ff" stroke="#000" stroke-width="1"/><rect x="571.5" y="403.5" width="28.0" height="46.0" fill="#707070" stroke="#000" stroke-width="1"/><rect x="601.5" y="403.5" width="28.0" height="46.0" fill="#707070" stroke="#000" stroke-width="1"/><rect x="631.5" y="403.5" width="28.0" height="46.0" fill="#707070" stroke="#000" stroke-width="1"/><rect x="661.5" y="403.5" width="28.0" height="46.0" fill="#707070" stroke="#000" stroke-width="1"/><rect x="691.5" y="403.5" width="28.0" height="46.0" fill="#707070" stroke="#000" stroke-width="1"/><rect x="721.5" y="403.5" width="28.0" height="46.0" fill="#707070" stroke="#000" stroke-width="1"/><rect x="751.5" y="403.5" width="28.0" height="46.0" fill="#0000ff" stroke="#000" stroke-width="1"/><rect x="781.5" y="408.5" width="28.0" height="41.0" fill="#707070" stroke="#000" stroke-width="1"/><rect x="811.5" y="414.5" width="28.0" height="35.0" fill="#707070" stroke="#000" stroke-width="1"/><rect x="842.5" y="420.5" width="28.0" height="29.0" fill="#707070" stroke="#000" stroke-width="1"/><rect x="872.5" y="425.5" width="28.0" height="24.0" fill="#707070" stroke="#000" stroke-width="1"/><rect x="902.5" y="431.5" width="28.0" height="18.0" fill="#707070" stroke="#000" stroke-width="1"/><rect x="932.5" y="436.5" width="28.0" height="13.0" fill="#707070" stroke="#000" stroke-width="1"/><rect x="962.5" y="442.5" width="28.0" height="7.0" fill="#707070" stroke="#000" stroke-width="1"/><line x1="268.0" y1="588.5" x2="1018" y2="588.5" stroke="#000" stroke-width="1"/><line x1="1017.5" y1="309.5" x2="1017.5" y2="589.5" stroke="#000" stroke-width="1"/></svg>
<div class="t mono" style="left:254.20px;top:302.50px;line-height:12px;height:13.2px;padding-top:1.8px;background:#ece9d8">25</div>
<div class="t mono" style="left:254.20px;top:313.70px;line-height:12px;height:13.2px;padding-top:1.8px;background:#ece9d8">23</div>
<div class="t mono" style="left:254.20px;top:324.90px;line-height:12px;height:13.2px;padding-top:1.8px;background:#ece9d8">21</div>
<div class="t mono" style="left:254.20px;top:336.10px;line-height:12px;height:13.2px;padding-top:1.8px;background:#ece9d8">19</div>
<div class="t mono" style="left:254.20px;top:347.30px;line-height:12px;height:13.2px;padding-top:1.8px;background:#ece9d8">17</div>
<div class="t mono" style="left:254.20px;top:358.50px;line-height:12px;height:13.2px;padding-top:1.8px;background:#ece9d8">15</div>
<div class="t mono" style="left:254.20px;top:369.70px;line-height:12px;height:13.2px;padding-top:1.8px;background:#ece9d8">13</div>
<div class="t mono" style="left:254.20px;top:380.90px;line-height:12px;height:13.2px;padding-top:1.8px;background:#ece9d8">11</div>
<div class="t mono" style="left:261.10px;top:392.10px;line-height:12px;height:13.2px;padding-top:1.8px;background:#ece9d8">9</div>
<div class="t mono" style="left:261.10px;top:403.30px;line-height:12px;height:13.2px;padding-top:1.8px;background:#ece9d8">7</div>
<div class="t mono" style="left:261.10px;top:414.50px;line-height:12px;height:13.2px;padding-top:1.8px;background:#ece9d8">5</div>
<div class="t mono" style="left:261.10px;top:425.70px;line-height:12px;height:13.2px;padding-top:1.8px;background:#ece9d8">3</div>
<div class="t mono" style="left:261.10px;top:436.90px;line-height:12px;height:13.2px;padding-top:1.8px;background:#ece9d8">1</div>
<div class="t mono" style="left:254.20px;top:448.10px;line-height:12px;height:13.2px;padding-top:1.8px;background:#ece9d8">-1</div>
<div class="t mono" style="left:254.20px;top:459.30px;line-height:12px;height:13.2px;padding-top:1.8px;background:#ece9d8">-3</div>
<div class="t mono" style="left:254.20px;top:470.50px;line-height:12px;height:13.2px;padding-top:1.8px;background:#ece9d8">-5</div>
<div class="t mono" style="left:254.20px;top:481.70px;line-height:12px;height:13.2px;padding-top:1.8px;background:#ece9d8">-7</div>
<div class="t mono" style="left:254.20px;top:492.90px;line-height:12px;height:13.2px;padding-top:1.8px;background:#ece9d8">-9</div>
<div class="t mono" style="left:247.30px;top:504.10px;line-height:12px;height:13.2px;padding-top:1.8px;background:#ece9d8">-11</div>
<div class="t mono" style="left:247.30px;top:515.30px;line-height:12px;height:13.2px;padding-top:1.8px;background:#ece9d8">-13</div>
<div class="t mono" style="left:247.30px;top:526.50px;line-height:12px;height:13.2px;padding-top:1.8px;background:#ece9d8">-15</div>
<div class="t mono" style="left:247.30px;top:537.70px;line-height:12px;height:13.2px;padding-top:1.8px;background:#ece9d8">-17</div>
<div class="t mono" style="left:247.30px;top:548.90px;line-height:12px;height:13.2px;padding-top:1.8px;background:#ece9d8">-19</div>
<div class="t mono" style="left:247.30px;top:560.10px;line-height:12px;height:13.2px;padding-top:1.8px;background:#ece9d8">-21</div>
<div class="t mono" style="left:247.30px;top:571.30px;line-height:12px;height:13.2px;padding-top:1.8px;background:#ece9d8">-23</div>
<div class="t mono" style="left:247.30px;top:582.50px;line-height:12px;height:13.2px;padding-top:1.8px;background:#ece9d8">-25</div>
<div class="t mono" style="left:264.50px;top:591.6px;line-height:12px;height:12px;background:#ece9d8">1</div>
<div class="t mono" style="left:294.60px;top:591.6px;line-height:12px;height:12px;background:#ece9d8">2</div>
<div class="t mono" style="left:324.70px;top:591.6px;line-height:12px;height:12px;background:#ece9d8">3</div>
<div class="t mono" style="left:354.80px;top:591.6px;line-height:12px;height:12px;background:#ece9d8">4</div>
<div class="t mono" style="left:384.90px;top:591.6px;line-height:12px;height:12px;background:#ece9d8">5</div>
<div class="t mono" style="left:415.00px;top:591.6px;line-height:12px;height:12px;background:#ece9d8">6</div>
<div class="t mono" style="left:445.10px;top:591.6px;line-height:12px;height:12px;background:#ece9d8">7</div>
<div class="t mono" style="left:475.20px;top:591.6px;line-height:12px;height:12px;background:#ece9d8">8</div>
<div class="t mono" style="left:505.30px;top:591.6px;line-height:12px;height:12px;background:#ece9d8">9</div>
<div class="t mono" style="left:531.95px;top:591.6px;line-height:12px;height:12px;background:#ece9d8">10</div>
<div class="t mono" style="left:562.05px;top:591.6px;line-height:12px;height:12px;background:#ece9d8">11</div>
<div class="t mono" style="left:592.15px;top:591.6px;line-height:12px;height:12px;background:#ece9d8">12</div>
<div class="t mono" style="left:622.25px;top:591.6px;line-height:12px;height:12px;background:#ece9d8">13</div>
<div class="t mono" style="left:652.35px;top:591.6px;line-height:12px;height:12px;background:#ece9d8">14</div>
<div class="t mono" style="left:682.45px;top:591.6px;line-height:12px;height:12px;background:#ece9d8">15</div>
<div class="t mono" style="left:712.55px;top:591.6px;line-height:12px;height:12px;background:#ece9d8">16</div>
<div class="t mono" style="left:742.65px;top:591.6px;line-height:12px;height:12px;background:#ece9d8">17</div>
<div class="t mono" style="left:772.75px;top:591.6px;line-height:12px;height:12px;background:#ece9d8">18</div>
<div class="t mono" style="left:802.85px;top:591.6px;line-height:12px;height:12px;background:#ece9d8">19</div>
<div class="t mono" style="left:832.95px;top:591.6px;line-height:12px;height:12px;background:#ece9d8">20</div>
<div class="t mono" style="left:863.05px;top:591.6px;line-height:12px;height:12px;background:#ece9d8">21</div>
<div class="t mono" style="left:893.15px;top:591.6px;line-height:12px;height:12px;background:#ece9d8">22</div>
<div class="t mono" style="left:923.25px;top:591.6px;line-height:12px;height:12px;background:#ece9d8">23</div>
<div class="t mono" style="left:953.35px;top:591.6px;line-height:12px;height:12px;background:#ece9d8">24</div>
<div class="t mono" style="left:983.45px;top:591.6px;line-height:12px;height:12px;background:#ece9d8">25</div>
<div class="t mono" style="left:188.1px;top:425px;width:96.8px;font-size:12px;letter-spacing:0.6px;line-height:14.6px;height:16.6px;padding-left:1.5px;padding-top:2.2px;background:#ece9d8;transform:rotate(-90deg)">Poprawka [%]</div>
<div class="a" style="left:278.0px;top:605.5px;width:16px;height:15.5px;background:#ece9d8"></div><div class="sunk" style="left:279.0px;top:606.5px;width:13px;height:13px;background:#fff"></div>
<div class="sunk" style="left:268.3px;top:624.3px;width:28.6px;height:22px;background:#ece9d8;box-shadow:inset 1px 1px 0 #aca899"></div>
<div class="t" style="left:268.3px;top:626.5px;width:25.8px;text-align:right;font-size:12px;font-weight:bold;line-height:14px;color:#aca899">0</div>
<div class="btn" style="left:279.0px;top:647.3px;width:17.3px;height:11px"></div><div class="btn" style="left:279.0px;top:659.0px;width:17.3px;height:11.5px"></div>
<svg class="a" style="left:285.2px;top:651.3px" width="5" height="3"><path d="M0.5 2.6H4.5L2.5 0.2Z" fill="#aca899"/></svg><svg class="a" style="left:285.2px;top:663.5px" width="5" height="3"><path d="M0.5 0.2H4.5L2.5 2.6Z" fill="#aca899"/></svg>
<div class="a" style="left:308.0px;top:605.5px;width:16px;height:15.5px;background:#ece9d8"></div><div class="sunk" style="left:309.0px;top:606.5px;width:13px;height:13px;background:#fff"></div>
<div class="sunk" style="left:297.5px;top:624.3px;width:29.1px;height:22px;background:#ece9d8;box-shadow:inset 1px 1px 0 #aca899"></div>
<div class="t" style="left:297.5px;top:626.5px;width:26.3px;text-align:right;font-size:12px;font-weight:bold;line-height:14px;color:#aca899">1</div>
<div class="btn" style="left:309.0px;top:646.3px;width:17.3px;height:11px"></div><div class="btn" style="left:309.0px;top:658.0px;width:17.3px;height:11.5px"></div>
<svg class="a" style="left:315.2px;top:650.3px" width="5" height="3"><path d="M0.5 2.6H4.5L2.5 0.2Z" fill="#aca899"/></svg><svg class="a" style="left:315.2px;top:662.5px" width="5" height="3"><path d="M0.5 0.2H4.5L2.5 2.6Z" fill="#aca899"/></svg>
<div class="a" style="left:338.5px;top:605.5px;width:16px;height:15.5px;background:#ece9d8"></div><div class="sunk" style="left:339.5px;top:606.5px;width:13px;height:13px;background:#fff"></div>
<div class="sunk" style="left:327.2px;top:624.3px;width:29.2px;height:22px;background:#ece9d8;box-shadow:inset 1px 1px 0 #aca899"></div>
<div class="t" style="left:327.2px;top:626.5px;width:26.4px;text-align:right;font-size:12px;font-weight:bold;line-height:14px;color:#aca899">2</div>
<div class="btn" style="left:339.0px;top:646.3px;width:17.3px;height:11px"></div><div class="btn" style="left:339.0px;top:658.0px;width:17.3px;height:11.5px"></div>
<svg class="a" style="left:345.2px;top:650.3px" width="5" height="3"><path d="M0.5 2.6H4.5L2.5 0.2Z" fill="#aca899"/></svg><svg class="a" style="left:345.2px;top:662.5px" width="5" height="3"><path d="M0.5 0.2H4.5L2.5 2.6Z" fill="#aca899"/></svg>
<div class="a" style="left:368.5px;top:605.5px;width:16px;height:15.5px;background:#ece9d8"></div><div class="sunk" style="left:369.5px;top:606.5px;width:13px;height:13px;background:#fff"></div>
<div class="sunk" style="left:357.0px;top:624.3px;width:29.9px;height:22px;background:#ece9d8;box-shadow:inset 1px 1px 0 #aca899"></div>
<div class="t" style="left:357.0px;top:626.5px;width:27.1px;text-align:right;font-size:12px;font-weight:bold;line-height:14px;color:#aca899">3</div>
<div class="btn" style="left:369.5px;top:647.3px;width:17.3px;height:11px"></div><div class="btn" style="left:369.5px;top:659.0px;width:17.3px;height:11.5px"></div>
<svg class="a" style="left:375.7px;top:651.3px" width="5" height="3"><path d="M0.5 2.6H4.5L2.5 0.2Z" fill="#aca899"/></svg><svg class="a" style="left:375.7px;top:663.5px" width="5" height="3"><path d="M0.5 0.2H4.5L2.5 2.6Z" fill="#aca899"/></svg>
<div class="a" style="left:396.5px;top:605.5px;width:16px;height:15.5px;background:#ece9d8"></div><div class="sunk" style="left:397.5px;top:606.5px;width:13px;height:13px;background:#fff"></div>
<div class="sunk" style="left:387.5px;top:624.3px;width:29.4px;height:22px;background:#ece9d8;box-shadow:inset 1px 1px 0 #aca899"></div>
<div class="t" style="left:387.5px;top:626.5px;width:26.6px;text-align:right;font-size:12px;font-weight:bold;line-height:14px;color:#aca899">4</div>
<div class="btn" style="left:399.0px;top:647.3px;width:17.3px;height:11px"></div><div class="btn" style="left:399.0px;top:659.0px;width:17.3px;height:11.5px"></div>
<svg class="a" style="left:405.2px;top:651.3px" width="5" height="3"><path d="M0.5 2.6H4.5L2.5 0.2Z" fill="#aca899"/></svg><svg class="a" style="left:405.2px;top:663.5px" width="5" height="3"><path d="M0.5 0.2H4.5L2.5 2.6Z" fill="#aca899"/></svg>
<div class="a" style="left:428.5px;top:605.5px;width:16px;height:15.5px;background:#ece9d8"></div><div class="sunk" style="left:429.5px;top:606.5px;width:13px;height:13px;background:#fff"></div>
<div class="sunk" style="left:417.5px;top:624.3px;width:29.1px;height:22px;background:#ece9d8;box-shadow:inset 1px 1px 0 #aca899"></div>
<div class="t" style="left:417.5px;top:626.5px;width:26.3px;text-align:right;font-size:12px;font-weight:bold;line-height:14px;color:#aca899">4</div>
<div class="btn" style="left:429.5px;top:647.3px;width:17.3px;height:11px"></div><div class="btn" style="left:429.5px;top:659.0px;width:17.3px;height:11.5px"></div>
<svg class="a" style="left:435.7px;top:651.3px" width="5" height="3"><path d="M0.5 2.6H4.5L2.5 0.2Z" fill="#aca899"/></svg><svg class="a" style="left:435.7px;top:663.5px" width="5" height="3"><path d="M0.5 0.2H4.5L2.5 2.6Z" fill="#aca899"/></svg>
<div class="a" style="left:458.5px;top:605.5px;width:16px;height:15.5px;background:#ece9d8"></div><div class="sunk" style="left:459.5px;top:606.5px;width:13px;height:13px;background:#fff"></div>
<div class="sunk" style="left:447.2px;top:624.3px;width:29.8px;height:22px;background:#ece9d8;box-shadow:inset 1px 1px 0 #aca899"></div>
<div class="t" style="left:447.2px;top:626.5px;width:27.0px;text-align:right;font-size:12px;font-weight:bold;line-height:14px;color:#aca899">5</div>
<div class="btn" style="left:459.5px;top:647.3px;width:17.3px;height:11px"></div><div class="btn" style="left:459.5px;top:659.0px;width:17.3px;height:11.5px"></div>
<svg class="a" style="left:465.7px;top:651.3px" width="5" height="3"><path d="M0.5 2.6H4.5L2.5 0.2Z" fill="#aca899"/></svg><svg class="a" style="left:465.7px;top:663.5px" width="5" height="3"><path d="M0.5 0.2H4.5L2.5 2.6Z" fill="#aca899"/></svg>
<div class="a" style="left:488.5px;top:605.5px;width:16px;height:15.5px;background:#ece9d8"></div><div class="sunk" style="left:489.5px;top:606.5px;width:13px;height:13px;background:#fff"></div>
<div class="sunk" style="left:477.6px;top:624.3px;width:29.6px;height:22px;background:#ece9d8;box-shadow:inset 1px 1px 0 #aca899"></div>
<div class="t" style="left:477.6px;top:626.5px;width:26.8px;text-align:right;font-size:12px;font-weight:bold;line-height:14px;color:#aca899">6</div>
<div class="btn" style="left:489.5px;top:646.3px;width:17.3px;height:11px"></div><div class="btn" style="left:489.5px;top:658.0px;width:17.3px;height:11.5px"></div>
<svg class="a" style="left:495.7px;top:650.3px" width="5" height="3"><path d="M0.5 2.6H4.5L2.5 0.2Z" fill="#aca899"/></svg><svg class="a" style="left:495.7px;top:662.5px" width="5" height="3"><path d="M0.5 0.2H4.5L2.5 2.6Z" fill="#aca899"/></svg>
<div class="a" style="left:518.5px;top:605.5px;width:16px;height:15.5px;background:#ece9d8"></div><div class="sunk" style="left:519.5px;top:606.5px;width:13px;height:13px;background:#fff"></div>
<div class="sunk" style="left:507.8px;top:624.3px;width:29.1px;height:22px;background:#ece9d8;box-shadow:inset 1px 1px 0 #aca899"></div>
<div class="t" style="left:507.8px;top:626.5px;width:26.3px;text-align:right;font-size:12px;font-weight:bold;line-height:14px;color:#aca899">7</div>
<div class="btn" style="left:519.5px;top:646.3px;width:17.3px;height:11px"></div><div class="btn" style="left:519.5px;top:658.0px;width:17.3px;height:11.5px"></div>
<svg class="a" style="left:525.7px;top:650.3px" width="5" height="3"><path d="M0.5 2.6H4.5L2.5 0.2Z" fill="#aca899"/></svg><svg class="a" style="left:525.7px;top:662.5px" width="5" height="3"><path d="M0.5 0.2H4.5L2.5 2.6Z" fill="#aca899"/></svg>
<div class="a" style="left:548.5px;top:605.5px;width:16px;height:15.5px;background:#ece9d8"></div><div class="sunk" style="left:549.5px;top:606.5px;width:13px;height:13px;background:#fff"></div>
<svg class="a" style="left:552.5px;top:609.5px" width="7" height="7"><path d="M0 2V5L2.5 7L7 2.5V0L2.5 4.5Z" fill="#000"/></svg>
<div class="sunk" style="left:537.5px;top:624.3px;width:28.7px;height:22px;background:#ece9d8;box-shadow:inset 1px 1px 0 #aca899"></div>
<div class="t" style="left:537.5px;top:626.5px;width:25.9px;text-align:right;font-size:12px;font-weight:bold;line-height:14px;color:#000">8</div>
<div class="btn" style="left:549.5px;top:647.3px;width:17.3px;height:11px"></div><div class="btn" style="left:549.5px;top:659.0px;width:17.3px;height:11.5px"></div>
<svg class="a" style="left:555.7px;top:651.3px" width="5" height="3"><path d="M0.5 2.6H4.5L2.5 0.2Z" fill="#000"/></svg><svg class="a" style="left:555.7px;top:663.5px" width="5" height="3"><path d="M0.5 0.2H4.5L2.5 2.6Z" fill="#000"/></svg>
<div class="a" style="left:576.0px;top:605.5px;width:16px;height:15.5px;background:#ece9d8"></div><div class="sunk" style="left:577.0px;top:606.5px;width:13px;height:13px;background:#fff"></div>
<div class="sunk" style="left:566.2px;top:624.3px;width:27.2px;height:22px;background:#ece9d8;box-shadow:inset 1px 1px 0 #aca899"></div>
<div class="t" style="left:566.2px;top:626.5px;width:24.4px;text-align:right;font-size:12px;font-weight:bold;line-height:14px;color:#aca899">8</div>
<div class="btn" style="left:579.0px;top:647.3px;width:17.3px;height:11px"></div><div class="btn" style="left:579.0px;top:659.0px;width:17.3px;height:11.5px"></div>
<svg class="a" style="left:585.2px;top:651.3px" width="5" height="3"><path d="M0.5 2.6H4.5L2.5 0.2Z" fill="#aca899"/></svg><svg class="a" style="left:585.2px;top:663.5px" width="5" height="3"><path d="M0.5 0.2H4.5L2.5 2.6Z" fill="#aca899"/></svg>
<div class="a" style="left:609.0px;top:605.5px;width:16px;height:15.5px;background:#ece9d8"></div><div class="sunk" style="left:610.0px;top:606.5px;width:13px;height:13px;background:#fff"></div>
<div class="sunk" style="left:597.8px;top:622.5px;width:31.1px;height:21.5px;background:#ece9d8;box-shadow:inset 1px 1px 0 #aca899"></div>
<div class="t" style="left:597.8px;top:624.7px;width:28.3px;text-align:right;font-size:12px;font-weight:bold;line-height:14px;color:#aca899">8</div>
<div class="btn" style="left:609.0px;top:647.3px;width:17.3px;height:11px"></div><div class="btn" style="left:609.0px;top:659.0px;width:17.3px;height:11.5px"></div>
<svg class="a" style="left:615.2px;top:651.3px" width="5" height="3"><path d="M0.5 2.6H4.5L2.5 0.2Z" fill="#aca899"/></svg><svg class="a" style="left:615.2px;top:663.5px" width="5" height="3"><path d="M0.5 0.2H4.5L2.5 2.6Z" fill="#aca899"/></svg>
<div class="a" style="left:639.0px;top:605.5px;width:16px;height:15.5px;background:#ece9d8"></div><div class="sunk" style="left:640.0px;top:606.5px;width:13px;height:13px;background:#fff"></div>
<div class="sunk" style="left:628.9px;top:622.5px;width:27.4px;height:21.5px;background:#ece9d8;box-shadow:inset 1px 1px 0 #aca899"></div>
<div class="t" style="left:628.9px;top:624.7px;width:24.6px;text-align:right;font-size:12px;font-weight:bold;line-height:14px;color:#aca899">8</div>
<div class="btn" style="left:641.5px;top:646.3px;width:17.3px;height:11px"></div><div class="btn" style="left:641.5px;top:658.0px;width:17.3px;height:11.5px"></div>
<svg class="a" style="left:647.7px;top:650.3px" width="5" height="3"><path d="M0.5 2.6H4.5L2.5 0.2Z" fill="#aca899"/></svg><svg class="a" style="left:647.7px;top:662.5px" width="5" height="3"><path d="M0.5 0.2H4.5L2.5 2.6Z" fill="#aca899"/></svg>
<div class="a" style="left:669.0px;top:605.5px;width:16px;height:15.5px;background:#ece9d8"></div><div class="sunk" style="left:670.0px;top:606.5px;width:13px;height:13px;background:#fff"></div>
<div class="sunk" style="left:658.4px;top:622.5px;width:28.4px;height:21.5px;background:#ece9d8;box-shadow:inset 1px 1px 0 #aca899"></div>
<div class="t" style="left:658.4px;top:624.7px;width:25.6px;text-align:right;font-size:12px;font-weight:bold;line-height:14px;color:#aca899">8</div>
<div class="btn" style="left:669.5px;top:647.3px;width:17.3px;height:11px"></div><div class="btn" style="left:669.5px;top:659.0px;width:17.3px;height:11.5px"></div>
<svg class="a" style="left:675.7px;top:651.3px" width="5" height="3"><path d="M0.5 2.6H4.5L2.5 0.2Z" fill="#aca899"/></svg><svg class="a" style="left:675.7px;top:663.5px" width="5" height="3"><path d="M0.5 0.2H4.5L2.5 2.6Z" fill="#aca899"/></svg>
<div class="a" style="left:698.5px;top:605.5px;width:16px;height:15.5px;background:#ece9d8"></div><div class="sunk" style="left:699.5px;top:606.5px;width:13px;height:13px;background:#fff"></div>
<div class="sunk" style="left:687.4px;top:622.5px;width:28.9px;height:21.5px;background:#ece9d8;box-shadow:inset 1px 1px 0 #aca899"></div>
<div class="t" style="left:687.4px;top:624.7px;width:26.1px;text-align:right;font-size:12px;font-weight:bold;line-height:14px;color:#aca899">8</div>
<div class="btn" style="left:699.5px;top:647.3px;width:17.3px;height:11px"></div><div class="btn" style="left:699.5px;top:659.0px;width:17.3px;height:11.5px"></div>
<svg class="a" style="left:705.7px;top:651.3px" width="5" height="3"><path d="M0.5 2.6H4.5L2.5 0.2Z" fill="#aca899"/></svg><svg class="a" style="left:705.7px;top:663.5px" width="5" height="3"><path d="M0.5 0.2H4.5L2.5 2.6Z" fill="#aca899"/></svg>
<div class="a" style="left:726.5px;top:605.5px;width:16px;height:15.5px;background:#ece9d8"></div><div class="sunk" style="left:727.5px;top:606.5px;width:13px;height:13px;background:#fff"></div>
<div class="sunk" style="left:716.9px;top:622.5px;width:28.9px;height:21.5px;background:#ece9d8;box-shadow:inset 1px 1px 0 #aca899"></div>
<div class="t" style="left:716.9px;top:624.7px;width:26.1px;text-align:right;font-size:12px;font-weight:bold;line-height:14px;color:#aca899">8</div>
<div class="btn" style="left:729.0px;top:647.3px;width:17.3px;height:11px"></div><div class="btn" style="left:729.0px;top:659.0px;width:17.3px;height:11.5px"></div>
<svg class="a" style="left:735.2px;top:651.3px" width="5" height="3"><path d="M0.5 2.6H4.5L2.5 0.2Z" fill="#aca899"/></svg><svg class="a" style="left:735.2px;top:663.5px" width="5" height="3"><path d="M0.5 0.2H4.5L2.5 2.6Z" fill="#aca899"/></svg>
<div class="a" style="left:758.5px;top:605.5px;width:16px;height:15.5px;background:#ece9d8"></div><div class="sunk" style="left:759.5px;top:606.5px;width:13px;height:13px;background:#fff"></div>
<svg class="a" style="left:762.5px;top:609.5px" width="7" height="7"><path d="M0 2V5L2.5 7L7 2.5V0L2.5 4.5Z" fill="#000"/></svg>
<div class="sunk" style="left:746.4px;top:622.5px;width:29.3px;height:21.5px;background:#ece9d8;box-shadow:inset 1px 1px 0 #aca899"></div>
<div class="t" style="left:746.4px;top:624.7px;width:26.5px;text-align:right;font-size:12px;font-weight:bold;line-height:14px;color:#000">8</div>
<div class="btn" style="left:759.0px;top:647.3px;width:17.3px;height:11px"></div><div class="btn" style="left:759.0px;top:659.0px;width:17.3px;height:11.5px"></div>
<svg class="a" style="left:765.2px;top:651.3px" width="5" height="3"><path d="M0.5 2.6H4.5L2.5 0.2Z" fill="#000"/></svg><svg class="a" style="left:765.2px;top:663.5px" width="5" height="3"><path d="M0.5 0.2H4.5L2.5 2.6Z" fill="#000"/></svg>
<div class="a" style="left:786.5px;top:605.5px;width:16px;height:15.5px;background:#ece9d8"></div><div class="sunk" style="left:787.5px;top:606.5px;width:13px;height:13px;background:#fff"></div>
<div class="sunk" style="left:776.3px;top:622.5px;width:30.0px;height:21.5px;background:#ece9d8;box-shadow:inset 1px 1px 0 #aca899"></div>
<div class="t" style="left:776.3px;top:624.7px;width:27.2px;text-align:right;font-size:12px;font-weight:bold;line-height:14px;color:#aca899">7</div>
<div class="btn" style="left:789.5px;top:647.3px;width:17.3px;height:11px"></div><div class="btn" style="left:789.5px;top:659.0px;width:17.3px;height:11.5px"></div>
<svg class="a" style="left:795.7px;top:651.3px" width="5" height="3"><path d="M0.5 2.6H4.5L2.5 0.2Z" fill="#aca899"/></svg><svg class="a" style="left:795.7px;top:663.5px" width="5" height="3"><path d="M0.5 0.2H4.5L2.5 2.6Z" fill="#aca899"/></svg>
<div class="a" style="left:818.5px;top:605.5px;width:16px;height:15.5px;background:#ece9d8"></div><div class="sunk" style="left:819.5px;top:606.5px;width:13px;height:13px;background:#fff"></div>
<div class="sunk" style="left:806.9px;top:622.5px;width:29.5px;height:21.5px;background:#ece9d8;box-shadow:inset 1px 1px 0 #aca899"></div>
<div class="t" style="left:806.9px;top:624.7px;width:26.7px;text-align:right;font-size:12px;font-weight:bold;line-height:14px;color:#aca899">6</div>
<div class="btn" style="left:819.0px;top:647.3px;width:17.3px;height:11px"></div><div class="btn" style="left:819.0px;top:659.0px;width:17.3px;height:11.5px"></div>
<svg class="a" style="left:825.2px;top:651.3px" width="5" height="3"><path d="M0.5 2.6H4.5L2.5 0.2Z" fill="#aca899"/></svg><svg class="a" style="left:825.2px;top:663.5px" width="5" height="3"><path d="M0.5 0.2H4.5L2.5 2.6Z" fill="#aca899"/></svg>
<div class="a" style="left:848.5px;top:605.5px;width:16px;height:15.5px;background:#ece9d8"></div><div class="sunk" style="left:849.5px;top:606.5px;width:13px;height:13px;background:#fff"></div>
<div class="sunk" style="left:837.0px;top:622.5px;width:29.2px;height:21.5px;background:#ece9d8;box-shadow:inset 1px 1px 0 #aca899"></div>
<div class="t" style="left:837.0px;top:624.7px;width:26.4px;text-align:right;font-size:12px;font-weight:bold;line-height:14px;color:#aca899">5</div>
<div class="btn" style="left:849.0px;top:647.3px;width:17.3px;height:11px"></div><div class="btn" style="left:849.0px;top:659.0px;width:17.3px;height:11.5px"></div>
<svg class="a" style="left:855.2px;top:651.3px" width="5" height="3"><path d="M0.5 2.6H4.5L2.5 0.2Z" fill="#aca899"/></svg><svg class="a" style="left:855.2px;top:663.5px" width="5" height="3"><path d="M0.5 0.2H4.5L2.5 2.6Z" fill="#aca899"/></svg>
<div class="a" style="left:878.0px;top:605.5px;width:16px;height:15.5px;background:#ece9d8"></div><div class="sunk" style="left:879.0px;top:606.5px;width:13px;height:13px;background:#fff"></div>
<div class="sunk" style="left:866.8px;top:622.5px;width:29.3px;height:21.5px;background:#ece9d8;box-shadow:inset 1px 1px 0 #aca899"></div>
<div class="t" style="left:866.8px;top:624.7px;width:26.5px;text-align:right;font-size:12px;font-weight:bold;line-height:14px;color:#aca899">4</div>
<div class="btn" style="left:879.0px;top:647.3px;width:17.3px;height:11px"></div><div class="btn" style="left:879.0px;top:659.0px;width:17.3px;height:11.5px"></div>
<svg class="a" style="left:885.2px;top:651.3px" width="5" height="3"><path d="M0.5 2.6H4.5L2.5 0.2Z" fill="#aca899"/></svg><svg class="a" style="left:885.2px;top:663.5px" width="5" height="3"><path d="M0.5 0.2H4.5L2.5 2.6Z" fill="#aca899"/></svg>
<div class="a" style="left:906.5px;top:605.5px;width:16px;height:15.5px;background:#ece9d8"></div><div class="sunk" style="left:907.5px;top:606.5px;width:13px;height:13px;background:#fff"></div>
<div class="sunk" style="left:896.7px;top:622.5px;width:29.3px;height:21.5px;background:#ece9d8;box-shadow:inset 1px 1px 0 #aca899"></div>
<div class="t" style="left:896.7px;top:624.7px;width:26.5px;text-align:right;font-size:12px;font-weight:bold;line-height:14px;color:#aca899">3</div>
<div class="btn" style="left:909.0px;top:647.3px;width:17.3px;height:11px"></div><div class="btn" style="left:909.0px;top:659.0px;width:17.3px;height:11.5px"></div>
<svg class="a" style="left:915.2px;top:651.3px" width="5" height="3"><path d="M0.5 2.6H4.5L2.5 0.2Z" fill="#aca899"/></svg><svg class="a" style="left:915.2px;top:663.5px" width="5" height="3"><path d="M0.5 0.2H4.5L2.5 2.6Z" fill="#aca899"/></svg>
<div class="a" style="left:936.0px;top:605.5px;width:16px;height:15.5px;background:#ece9d8"></div><div class="sunk" style="left:937.0px;top:606.5px;width:13px;height:13px;background:#fff"></div>
<div class="sunk" style="left:926.6px;top:622.5px;width:30.2px;height:21.5px;background:#ece9d8;box-shadow:inset 1px 1px 0 #aca899"></div>
<div class="t" style="left:926.6px;top:624.7px;width:27.4px;text-align:right;font-size:12px;font-weight:bold;line-height:14px;color:#aca899">2</div>
<div class="btn" style="left:939.0px;top:647.3px;width:17.3px;height:11px"></div><div class="btn" style="left:939.0px;top:659.0px;width:17.3px;height:11.5px"></div>
<svg class="a" style="left:945.2px;top:651.3px" width="5" height="3"><path d="M0.5 2.6H4.5L2.5 0.2Z" fill="#aca899"/></svg><svg class="a" style="left:945.2px;top:663.5px" width="5" height="3"><path d="M0.5 0.2H4.5L2.5 2.6Z" fill="#aca899"/></svg>
<div class="a" style="left:966.0px;top:605.5px;width:16px;height:15.5px;background:#ece9d8"></div><div class="sunk" style="left:967.0px;top:606.5px;width:13px;height:13px;background:#fff"></div>
<div class="sunk" style="left:957.4px;top:622.5px;width:29.2px;height:21.5px;background:#ece9d8;box-shadow:inset 1px 1px 0 #aca899"></div>
<div class="t" style="left:957.4px;top:624.7px;width:26.4px;text-align:right;font-size:12px;font-weight:bold;line-height:14px;color:#aca899">1</div>
<div class="btn" style="left:969.0px;top:647.3px;width:17.3px;height:11px"></div><div class="btn" style="left:969.0px;top:659.0px;width:17.3px;height:11.5px"></div>
<svg class="a" style="left:975.2px;top:651.3px" width="5" height="3"><path d="M0.5 2.6H4.5L2.5 0.2Z" fill="#aca899"/></svg><svg class="a" style="left:975.2px;top:663.5px" width="5" height="3"><path d="M0.5 0.2H4.5L2.5 2.6Z" fill="#aca899"/></svg>
<div class="a" style="left:995.5px;top:605.5px;width:16px;height:15.5px;background:#ece9d8"></div><div class="sunk" style="left:996.5px;top:606.5px;width:13px;height:13px;background:#fff"></div>
<div class="sunk" style="left:987.2px;top:622.5px;width:28.4px;height:21.5px;background:#ece9d8;box-shadow:inset 1px 1px 0 #aca899"></div>
<div class="t" style="left:987.2px;top:624.7px;width:25.6px;text-align:right;font-size:12px;font-weight:bold;line-height:14px;color:#aca899">0</div>
<div class="btn" style="left:999.0px;top:647.3px;width:17.3px;height:11px"></div><div class="btn" style="left:999.0px;top:659.0px;width:17.3px;height:11.5px"></div>
<svg class="a" style="left:1005.2px;top:651.3px" width="5" height="3"><path d="M0.5 2.6H4.5L2.5 0.2Z" fill="#aca899"/></svg><svg class="a" style="left:1005.2px;top:663.5px" width="5" height="3"><path d="M0.5 0.2H4.5L2.5 2.6Z" fill="#aca899"/></svg>
<div class="btn" style="left:270.4px;top:676px;width:110.5px;height:22.5px"></div>
<div class="t" style="left:276.30px;top:681.92px;font-size:11px;line-height:11px;letter-spacing:-0.224px;color:#000;">Wczytaj z urządzenia</div>
<div class="a" style="left:421px;top:676px;width:117px;height:23px;background:#000"></div>
<div class="btn" style="left:422px;top:677px;width:115px;height:21px"></div>
<div class="t" style="left:430.50px;top:681.92px;font-size:11px;line-height:11px;letter-spacing:-0.264px;color:#000;">Wpisz do urządzenia</div>
<div class="btn" style="left:601px;top:674.2px;width:134.5px;height:22.8px"></div>
<div class="t" style="left:631.90px;top:681.22px;font-size:11px;line-height:11px;letter-spacing:-0.077px;color:#000;">Kasuj poprawki</div>
<div class="a" style="left:0;top:713px;width:1024px;height:1px;background:#fff"></div>
<div class="sb" style="left:1px;top:719px;width:251px;height:16px"></div>
<div class="t" style="left:3.25px;top:722.67px;font-size:11px;line-height:11px;letter-spacing:-0.112px;color:#000;">Próbka = 1255, wartość = 2.6</div>
<div class="sb" style="left:257px;top:719px;width:86px;height:16px;background:#00ff00"></div>
<div class="t" style="left:257.75px;top:722.22px;font-size:11px;line-height:11px;letter-spacing:0.037px;color:#000;">Połączony</div>
<div class="sb" style="left:348px;top:719px;width:52px;height:16px;background:#ff0000"></div>
<div class="t" style="left:348.90px;top:722.22px;font-size:11px;line-height:11px;letter-spacing:0.597px;color:#300000;">Błąd</div>
<div class="sb" style="left:485px;top:719px;width:97px;height:16px"></div>
<div class="t" style="left:486.35px;top:723.02px;font-size:11px;line-height:11px;letter-spacing:-0.179px;color:#000;">Praca wtryskiwaczy</div>
<div class="a" style="left:591px;top:719.5px;width:16px;height:14px;background:#00ff00;font-size:11px;line-height:14px;text-align:center">1</div>
<div class="a" style="left:614px;top:719.5px;width:16px;height:14px;background:#00ff00;font-size:11px;line-height:14px;text-align:center">2</div>
<div class="a" style="left:636px;top:719.5px;width:16px;height:14px;background:#00ff00;font-size:11px;line-height:14px;text-align:center">3</div>
<div class="a" style="left:657px;top:719.5px;width:16px;height:14px;background:#00ff00;font-size:11px;line-height:14px;text-align:center">4</div>
<div class="a" style="left:679px;top:719.5px;width:16px;height:14px;background:#808080;font-size:11px;line-height:14px;text-align:center">5</div>
<div class="a" style="left:703px;top:719.5px;width:16px;height:14px;background:#808080;font-size:11px;line-height:14px;text-align:center">6</div>
<div class="a" style="left:723px;top:719.5px;width:16px;height:14px;background:#808080;font-size:11px;line-height:14px;text-align:center">7</div>
<div class="a" style="left:746.5px;top:719.5px;width:16px;height:14px;background:#808080;font-size:11px;line-height:14px;text-align:center">8</div>
<div class="sb" style="left:791px;top:719px;width:108px;height:16px"></div>
<div class="a" style="left:0;top:736px;width:1024px;height:1px;background:#aca899"></div><div class="a" style="left:0;top:737px;width:1024px;height:1px;background:#fff"></div>
<div class="a" style="left:0;top:738px;width:1024px;height:30px;background:linear-gradient(to bottom,#2a5fc8 0px,#4a8ef0 1px,#4389ec 3px,#2f6add 4.5px,#2255d2 6.5px,#2357d5 11px,#2560de 20px,#2562e0 27px,#204fc4 28.5px,#1a42aa 30px)"></div>
<div class="a" style="left:0;top:738px;width:98px;height:30px;border-radius:0 10px 12px 0 / 0 14px 16px 0;background:linear-gradient(to bottom,#2f7f2f 0px,#5cb35c 2px,#4aa84a 4px,#3f9f3f 7px,#3c9c3c 15px,#3a9a3a 22px,#349034 27px,#2a7a2a 30px);box-shadow:inset -3px 0 4px #2a7a2a, inset 2px 0 2px #2f7f2f, 1px 0 2px #1a3a9a"></div>
<div class="t" style="left:35.00px;top:744.64px;font-size:17px;line-height:17px;letter-spacing:-0.125px;color:#fff;font-weight:bold;font-style:italic;text-shadow:1px 1px 1px #1a4a1a;">Start</div>
<svg class="a" style="left:10px;top:743px" width="20" height="19" viewBox="0 0 20 19"><path d="M2 2Q5 0 8.5 2L7.5 8.5Q4.5 6.5 1 8.5Z" fill="#e8602c"/><path d="M10 2.5Q13.5 4.5 17.5 2.5L16.5 9Q13 11 9 9Z" fill="#7cc242"/><path d="M1 10Q4 8 7.5 10L6.5 16.5Q3.5 14.5 0 16.5Z" fill="#4a90e8"/><path d="M9 10.5Q12.5 12.5 16.5 10.5L15.5 17Q12 19 8 17Z" fill="#f8c828"/></svg>
<svg class="a" style="left:110.5px;top:744px" width="17" height="17" viewBox="0 0 17 17"><circle cx="9.3" cy="7.5" r="5.8" fill="#3a6ad0"/><circle cx="10.5" cy="6" r="3" fill="#7ab0e8"/><path d="M1.5 1.5L4.5 3.5L6.5 1.8L7.5 4.5Q5 6 6.5 8.5Q8.5 11.5 12 10.5Q14.5 9.5 15 6Q17 10.5 13.5 14.2Q9.5 17.5 4.5 14.8Q0 11.5 1 6Z" fill="#e8781a"/><path d="M2 8Q3 13.5 8.5 14.8Q4.5 15.5 2.3 12Z" fill="#c85808"/><path d="M4 5.5Q5.5 4.5 7 5.2L6 7.2Z" fill="#f8b040"/></svg>
<svg class="a" style="left:134px;top:744px" width="17" height="17" viewBox="0 0 17 17"><path d="M6.5 2Q2 3 1.5 8Q2 13.5 7 14Q11 14 12 11L12.5 7L14 5L12 3.5L12.5 1.5L10 2.5Z" fill="#f4f8ff" stroke="#1a4ab8" stroke-width="0.8"/><path d="M6.5 4.5Q4 5.5 4 8.5Q4.5 11.5 7.5 11.5Q9.5 11.5 10.5 10" fill="none" stroke="#8ac0f0" stroke-width="1.6"/><path d="M7 8.5L10.5 6" stroke="#203040" stroke-width="1.1"/><path d="M12.5 5.5L15 6.5L13 7.5Z" fill="#e86a2a"/></svg>
<svg class="a" style="left:157px;top:748px" width="17" height="11" viewBox="0 0 17 11"><path d="M0.5 4L7 1L16 4L9.5 7.5Z" fill="#f0f0f4"/><path d="M0.5 4L9.5 7.5V9.8L0.5 6Z" fill="#b0b0bc"/><path d="M9.5 7.5L16 4V6L9.5 9.8Z" fill="#787884"/></svg>
<div class="a" style="left:226px;top:741.5px;width:158px;height:23.5px;border-radius:3px;background:linear-gradient(to bottom,#5c9cfa 0%,#4287f4 10%,#3b80f2 30%,#3a7ef0 70%,#3672e2 100%);border:1px solid #2a5cc8;border-top-color:#6aa4fa"></div>
<div class="t" style="left:254.25px;top:750.22px;font-size:11px;line-height:11px;letter-spacing:-0.06px;color:#fff;">Nowy folder</div>
<div class="a" style="left:385px;top:741.5px;width:159.5px;height:23.5px;border-radius:3px;background:linear-gradient(to bottom,#163ca0 0%,#1a47b6 12%,#1d4ec4 30%,#1e50c8 100%);border:1px solid #163a9c;border-top-color:#12308a"></div>
<div class="t" style="left:415.00px;top:749.67px;font-size:11px;line-height:11px;letter-spacing:0.3px;color:#fff;transform:scaleX(0.87);transform-origin:0 0;">LPGApp</div>
<div class="a" style="left:546px;top:741.5px;width:158px;height:23.5px;border-radius:3px;background:linear-gradient(to bottom,#5c9cfa 0%,#4287f4 10%,#3b80f2 30%,#3a7ef0 70%,#3672e2 100%);border:1px solid #2a5cc8;border-top-color:#6aa4fa"></div>
<div class="t" style="left:574.15px;top:750.22px;font-size:11px;line-height:11px;letter-spacing:-0.02px;color:#fff;">Jak prawidłowo zrobi…</div>
<svg class="a" style="left:234px;top:746px" width="17" height="14" viewBox="0 0 17 14"><path d="M1 2.5Q1 1 2.5 1H6L8 3H14.5Q16 3 16 4.5V12Q16 13 15 13H2Q1 13 1 12Z" fill="#f8d878" stroke="#b8923a"/><path d="M1.5 5.5H15.5V12.5H1.5Z" fill="#fbe9a0"/></svg>
<svg class="a" style="left:395px;top:747px" width="15" height="15" viewBox="0 0 15 15"><rect x="0" y="6.1" width="14" height="3.9" fill="#000018"/><rect x="2" y="9.8" width="9.2" height="4.1" fill="#000030"/><rect x="3.2" y="11.1" width="6.8" height="1.7" fill="#1e50c8"/><path d="M1.7 0.2V4H5 M6.6 4.6V0.8H9V2.6H6.6 M14 0.8H11V4H13.8V2.6H12.6" fill="none" stroke="#000050" stroke-width="1.35"/></svg>
<svg class="a" style="left:555.5px;top:744.5px" width="17" height="17" viewBox="0 0 17 17"><circle cx="9.3" cy="7.5" r="5.8" fill="#3a6ad0"/><circle cx="10.5" cy="6" r="3" fill="#7ab0e8"/><path d="M1.5 1.5L4.5 3.5L6.5 1.8L7.5 4.5Q5 6 6.5 8.5Q8.5 11.5 12 10.5Q14.5 9.5 15 6Q17 10.5 13.5 14.2Q9.5 17.5 4.5 14.8Q0 11.5 1 6Z" fill="#e8781a"/><path d="M2 8Q3 13.5 8.5 14.8Q4.5 15.5 2.3 12Z" fill="#c85808"/><path d="M4 5.5Q5.5 4.5 7 5.2L6 7.2Z" fill="#f8b040"/></svg>
<div class="a" style="left:895px;top:738px;width:129px;height:30px;background:linear-gradient(to bottom,#1a78d8 0%,#2aa0f0 4%,#1896e8 10%,#118ee6 30%,#1290e8 70%,#0f80d8 92%,#0a62b8 100%);border-left:1px solid #0a3a98"></div>
<svg class="a" style="left:904px;top:743px" width="20" height="19" viewBox="0 0 20 19"><rect x="2.5" y="5" width="6" height="7.5" fill="#a8ccf4" stroke="#7aa6e0" stroke-width="0.8"/><rect x="2" y="14" width="7" height="2" fill="#dce8f8"/><path d="M11 4.5Q12.5 6.5 11 8.5M13 3.5Q15.5 6.5 13 9.5M15 2.5Q18.5 6.5 15 10.5" fill="none" stroke="#e8eef8" stroke-width="1.1"/></svg>
<div class="a" style="left:924px;top:745px;width:16px;height:16px;border-radius:50%;background:radial-gradient(circle at 45% 40%,#f8a040 0%,#ea7418 45%,#c85408 80%,#9a3c00 100%)"></div>
<svg class="a" style="left:924px;top:745px" width="16" height="16" viewBox="0 0 16 16"><path d="M11.2 10.8A4 4 0 1 1 11.8 6.2L12 11.5" fill="none" stroke="#fff" stroke-width="2"/></svg>
<div class="a" style="left:942.5px;top:744.5px;width:13.5px;height:13.5px;border-radius:50%;background:radial-gradient(circle at 42% 42%,#202020 0%,#3a3a3a 25%,#8a8a8a 55%,#b0b0b0 70%,#606060 100%)"></div>
<svg class="a" style="left:950px;top:752px" width="10" height="10" viewBox="0 0 10 10"><path d="M1 8L7 2M3 9L9 3" stroke="#7aa8f0" stroke-width="1" fill="none"/></svg>
<div class="t" style="left:960px;top:744.5px;font-family:'Liberation Serif';font-size:18px;font-weight:bold;color:#10e020;line-height:18px;text-shadow:1px 1px 0 #003800">K</div>
<svg class="a" style="left:964px;top:743px" width="12" height="10" viewBox="0 0 12 10"><path d="M2 5Q4 1 8 2.5M8 2.5L7.5 7.5M9.5 1L9.5 6.5" fill="none" stroke="#20d8e8" stroke-width="1.4"/><circle cx="6.7" cy="7.8" r="1.2" fill="#003030"/></svg>
<div class="t" style="left:982.70px;top:749.67px;font-size:11px;line-height:11px;letter-spacing:0.051px;color:#fff;">19:18</div>
</div></body></html>
